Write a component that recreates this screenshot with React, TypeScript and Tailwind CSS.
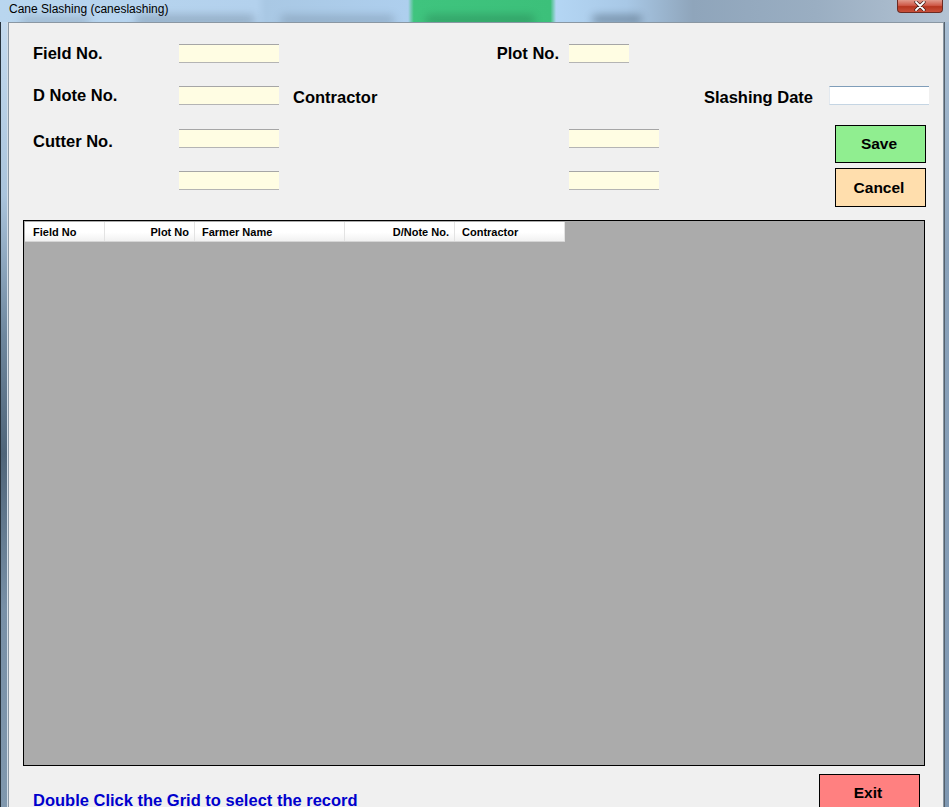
import React from "react";

function TextBox({ width, white }: { width: number; white?: boolean }) {
  if (white) {
    return (
      <div
        className="h-[19px] shrink-0 border-t border-b border-l border-t-[#7f9db9] border-b-[#c5d5e3] border-l-[#e3e9ef] bg-white"
        style={{ width }}
      />
    );
  }
  return (
    <div
      className="h-[19px] shrink-0 border-t border-b border-t-[#a6a6a6] border-b-[#b4b4b4] bg-[#fffde3]"
      style={{ width }}
    />
  );
}

function Label({ children, className = "" }: { children: React.ReactNode; className?: string }) {
  return (
    <span className={`text-[16.5px] leading-[19px] font-bold text-black whitespace-nowrap ${className}`}>
      {children}
    </span>
  );
}

function TitleBar() {
  return (
    <div className="relative h-[22px] shrink-0 flex items-start overflow-hidden bg-[linear-gradient(90deg,#b9d6ef_0%,#b3d1ed_27%,#a9c8e4_28%,#aecfee_43%,#3fc47e_43.6%,#3cc07a_58%,#b4d6f4_58.6%,#a8c8e6_66%,#8fa5bb_73%,#9aaec2_86%,#b3c3d3_100%)]">
      {/* blurred content of the window behind */}
      <div className="absolute left-[20px] top-[16px] h-[10px] w-[70px] rounded-full bg-[#5a6a7a] opacity-25 blur-[4px]" />
      <div className="absolute left-[135px] top-[15px] h-[10px] w-[120px] rounded-full bg-[#4a5a6a] opacity-30 blur-[4px]" />
      <div className="absolute left-[280px] top-[15px] h-[10px] w-[115px] rounded-full bg-[#4a5a6a] opacity-25 blur-[4px]" />
      <div className="absolute left-[425px] top-[15px] h-[10px] w-[110px] rounded-full bg-[#1a5a3a] opacity-30 blur-[4px]" />
      <div className="absolute left-[592px] top-[15px] h-[9px] w-[50px] rounded-full bg-[#2a3a4a] opacity-40 blur-[4px]" />
      <span className="relative ml-[9px] mt-[1px] font-['Liberation_Sans',Arial,sans-serif] text-[12px] leading-[16px] text-black">
        Cane Slashing (caneslashing)
      </span>
      <div className="relative ml-auto mr-[6px] flex h-[13px] w-[46px] items-center justify-center rounded-b-[4px] border border-t-0 border-[#6b2a22] bg-[linear-gradient(180deg,#e19a8c_0%,#cf5a48_45%,#b6361f_55%,#c9503a_100%)]">
        <svg width="12" height="10" viewBox="0 0 12 10">
          <path d="M2 1 L10 9 M10 1 L2 9" stroke="#3a1a16" strokeWidth="3.2" strokeLinecap="round" />
          <path d="M2 1 L10 9 M10 1 L2 9" stroke="#ffffff" strokeWidth="1.8" strokeLinecap="round" />
        </svg>
      </div>
    </div>
  );
}

function GridHeader() {
  const cols = [
    { title: "Field No", w: 80, cls: "justify-start pl-[8px]" },
    { title: "Plot No", w: 90, cls: "justify-end pr-[5px]" },
    { title: "Farmer Name", w: 150, cls: "justify-start pl-[7px]" },
    { title: "D/Note No.", w: 110, cls: "justify-end pr-[5px]" },
    { title: "Contractor", w: 110, cls: "justify-start pl-[7px]" },
  ];
  return (
    <div className="flex h-[20px] w-[540px] border-b border-[#d5d5d5] bg-[linear-gradient(180deg,#ffffff_0%,#ffffff_55%,#f1f1f1_100%)]">
      {cols.map((c) => (
        <div
          key={c.title}
          className={`flex items-center border-r border-[#e3e3e3] pt-[1px] text-[11px] font-bold text-black ${c.cls}`}
          style={{ width: c.w }}
        >
          {c.title}
        </div>
      ))}
    </div>
  );
}

export default function App() {
  return (
    <div className="flex h-[807px] w-[949px] flex-col overflow-hidden font-['Liberation_Sans',Arial,sans-serif]">
      <TitleBar />
      <div className="flex min-h-0 flex-1">
        {/* left frame */}
        <div className="flex w-[8px] shrink-0">
          <div className="w-[1px] bg-[#26323c]" />
          <div className="w-[6px] bg-[linear-gradient(180deg,#c3daef_0%,#aac4dc_22%,#6e879e_40%,#4f6579_55%,#7890a7_75%,#8098ae_100%)]" />
          <div className="w-[1px] bg-[#d3dee8]" />
        </div>

        {/* client area */}
        <div className="flex w-[936px] shrink-0 flex-col border border-b-0 border-[#8a97a3] bg-[#f0f0f0]">
          {/* row 1 */}
          <div className="mt-[21px] flex h-[19px] items-center pl-[24px]">
            <Label className="w-[146px]">Field No.</Label>
            <TextBox width={100} />
            <Label className="w-[280px] text-right">Plot No.</Label>
            <div className="ml-[10px]">
              <TextBox width={60} />
            </div>
          </div>

          {/* row 2 */}
          <div className="mt-[23px] flex h-[19px] items-center pl-[24px] pr-[14px]">
            <Label className="w-[146px]">D Note No.</Label>
            <TextBox width={100} />
            <Label className="ml-[14px] mt-[3px]">Contractor</Label>
            <Label className="ml-auto mt-[3px]">Slashing Date</Label>
            <div className="ml-[16px]">
              <TextBox width={100} white />
            </div>
          </div>

          {/* rows 3 & 4 with buttons */}
          <div className="mt-[20px] flex">
            <div className="flex flex-1 flex-col pt-[4px]">
              <div className="flex h-[19px] items-center pl-[24px]">
                <Label className="mt-[5px] w-[146px]">Cutter No.</Label>
                <TextBox width={100} />
                <div className="ml-[290px]">
                  <TextBox width={90} />
                </div>
              </div>
              <div className="mt-[23px] flex h-[19px] items-center pl-[170px]">
                <TextBox width={100} />
                <div className="ml-[290px]">
                  <TextBox width={90} />
                </div>
              </div>
            </div>
            <div className="mr-[17px] flex w-[91px] flex-col">
              <button className="flex h-[38px] items-center justify-center border border-black bg-[#90ee90] pr-[3px] text-[15.5px] font-bold text-black">
                Save
              </button>
              <button className="mt-[5px] flex h-[39px] items-center justify-center border border-black bg-[#ffdead] pr-[3px] text-[15.5px] font-bold text-black">
                Cancel
              </button>
            </div>
          </div>

          {/* data grid */}
          <div className="ml-[14px] mt-[13px] h-[546px] w-[902px] shrink-0 border border-black bg-[#ababab] p-[1px]">
            <GridHeader />
          </div>

          {/* bottom */}
          <div className="mt-[8px] flex items-start pl-[24px] pr-[23px]">
            <span className="mt-[17px] text-[16.5px] leading-[18px] font-bold text-[#0000cd]">
              Double Click the Grid to select the record
            </span>
            <button className="ml-auto flex h-[38px] w-[101px] items-center justify-center border border-black bg-[#ff8080] pr-[3px] text-[15.5px] font-bold text-black">
              Exit
            </button>
          </div>
        </div>

        {/* right frame */}
        <div className="flex w-[5px] shrink-0">
          <div className="w-[1px] bg-[#55616c]" />
          <div className="w-[4px] bg-[linear-gradient(180deg,#a9bfd4_0%,#8aa2ba_30%,#7f98b2_100%)]" />
        </div>
      </div>
    </div>
  );
}
